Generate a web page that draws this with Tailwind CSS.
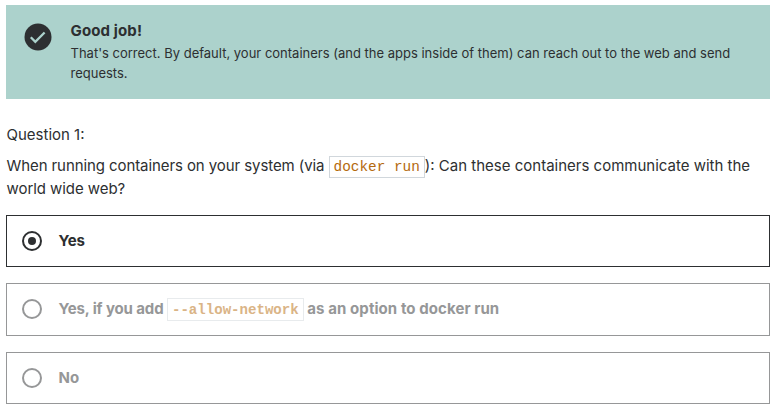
<!DOCTYPE html>
<html lang="en"><head><meta charset="utf-8"><title>Quiz</title>
<script src="https://cdn.jsdelivr.net/npm/@tailwindcss/browser@4"></script></head>
<body class="bg-white text-[#2d2f31] font-['Inter',sans-serif] overflow-hidden">
<main class="w-[764px] ml-1.5 pt-[5px]">
<section class="flex h-[94px] bg-[#acd2cc] pl-[18px] pt-[16px]">
<svg class="w-7 h-7 mt-[2px] shrink-0" viewBox="0 0 28 28"><circle cx="14" cy="14" r="13.5" fill="#2d2f31"/><path d="M6.8 14.3l4.5 4.5L20.6 9.5" fill="none" stroke="#acd2cc" stroke-width="2.3"/></svg>
<div class="ml-[18.5px]"><h2 class="text-[15px] leading-5 font-bold tracking-[0.13px]">Good job!</h2>
<p class="text-[13px] leading-5 mt-[2px] whitespace-nowrap">That's correct. By default, your containers (and the apps inside of them) can reach out to the web and send<br>requests.</p></div>
</section>
<p class="mt-[25px] pl-[0.5px] text-[15px] leading-[22px]">Question 1:</p>
<p class="mt-[9px] pl-[0.5px] text-[15px] leading-[22.4px] whitespace-nowrap"><span class="tracking-[-0.085px]">When running containers on your system (via </span><code class="border border-[#d1d7dc] px-1 py-0.5 text-[14.4px] text-[#b4690e] font-['Liberation_Mono',monospace]">docker run</code>): Can these containers communicate with the<br><span class="tracking-[-0.06px]">world wide web?</span></p>
<div class="mt-[14.2px] flex flex-col gap-4 text-[15px] font-bold">
<label class="flex h-[52px] items-center border border-[#2d2f31] pl-[15px]"><svg class="w-5 h-5" viewBox="0 0 20 20"><circle cx="10" cy="10" r="9" fill="none" stroke="currentColor" stroke-width="2"/><circle cx="10" cy="10" r="4" fill="currentColor"/></svg><span class="ml-[16.5px] tracking-[-0.15px]">Yes</span></label>
<label class="flex h-[53px] items-center border border-[#969798] text-[#969798] pl-[15px]"><svg class="w-5 h-5 mb-px" viewBox="0 0 20 20"><circle cx="10" cy="10" r="9" fill="none" stroke="currentColor" stroke-width="2"/></svg><span class="ml-[16.5px]"><span class="tracking-[-0.12px]">Yes, if you add </span><code class="border border-[#e8ebed] px-1 py-[2.5px] text-[14.08px] text-[#dab486] font-['Liberation_Mono',monospace]">--allow-network</code><span class="tracking-[0.08px]"> as an option to docker run</span></span></label>
<label class="flex h-[52px] items-center border border-[#969798] text-[#969798] pl-[15px]"><svg class="w-5 h-5" viewBox="0 0 20 20"><circle cx="10" cy="10" r="9" fill="none" stroke="currentColor" stroke-width="2"/></svg><span class="ml-[16.5px]">No</span></label>
</div></main></body></html>
